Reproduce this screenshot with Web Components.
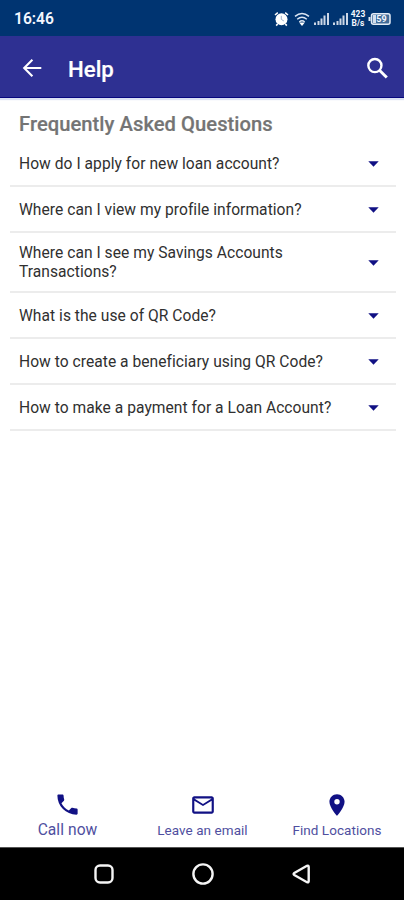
<!DOCTYPE html>
<html lang="en">
<head>
<meta charset="utf-8">
<title>Help</title>
<style>
html,body{margin:0;height:100%;background:#fff;font-family:Roboto,"Liberation Sans",sans-serif}
body{overflow:hidden}
</style>
</head>
<body>
<help-screen></help-screen>
<script>
const define = (name, html) => {
  const t = document.createElement('template');
  t.innerHTML = html;
  customElements.define(name, class extends HTMLElement {
    constructor() {
      super();
      this.attachShadow({mode: 'open'}).append(t.content.cloneNode(true));
    }
  });
};

define('status-bar', `<style>
:host{display:flex;height:36px;box-sizing:border-box;background:#003471;color:#f4f7ff;padding:1px 13px 0 14px;align-items:center;justify-content:space-between}
.time{font-size:15.6px;font-weight:600;line-height:20px;padding-top:1px}
.icons{display:flex;align-items:center;height:20px}
svg{display:block;flex:none}
.rate{font-size:8.4px;line-height:9px;font-weight:700;text-align:center;width:16px;margin:0 2px 0 1px}
.rate div{height:9px}
.bat{width:23px;height:12px;display:grid}
.bat svg{grid-area:1/1}
.bat span{grid-area:1/1;font-size:9px;line-height:12px;font-weight:700;text-align:center;padding-left:4px;z-index:1}
</style>
<span class="time">16:46</span>
<div class="icons">
<svg width="15" height="16" viewBox="0 0 15 16"><circle cx="7.5" cy="8.2" r="6" fill="#fff"/><path d="M1 4 3.8 1.7M14 4 11.2 1.7M3.6 13 2.2 14.6M11.4 13l1.4 1.6" stroke="#fff" stroke-width="1.6"/><path d="M7.3 4.8v3.6l2.6 1.6" fill="none" stroke="#9db1cc" stroke-width="1"/></svg>
<svg width="16" height="16" viewBox="0 0 16 16" style="margin:0 3px 0 5px"><path d="M1 5.4q7-6 14 0M3.2 8.3q4.8-4.2 9.6 0M5.3 11q2.7-2.4 5.4 0" fill="none" stroke="#dce6f4" stroke-width="1.4"/><path d="M5.2 11.6h5.6L8 15z" fill="#fff"/></svg>
<svg width="17" height="14" viewBox="0 0 17 14" style="margin-right:2px"><path d="M1 10.5h2V13H1zM4.5 9h2v4h-2zM7.5 6.5h2V13h-2zM10.5 3.5h2V13h-2zM14 1h2v12h-2z" fill="#cdd7e7"/></svg>
<svg width="17" height="14" viewBox="0 0 17 14"><path d="M1 10.5h2V13H1zM4.5 9h2v4h-2zM7.5 6.5h2V13h-2zM10.5 3.5h2V13h-2zM14 1h2v12h-2z" fill="#cdd7e7"/></svg>
<div class="rate"><div>423</div><div>B/s</div></div>
<div class="bat"><svg width="23" height="12" viewBox="0 0 23 12"><rect x="3.5" y=".8" width="18.5" height="10.4" rx="2" fill="#416b98" stroke="#e3ebf6" stroke-width="1.5"/><path d="M.5 4h2v4h-2z" fill="#e3ebf6"/><path d="M5 2h3v8H5z" fill="#d4dfed"/></svg><span>59</span></div>
</div>`);

define('app-bar', `<style>
:host{display:flex;height:62px;box-sizing:border-box;background:#2e3092;color:#fff;align-items:center;padding:1px 14px 0 20px;border-bottom:1px solid #07077e;box-shadow:0 2px 1px #dbe1f3;z-index:1}
h1{margin:4px auto 0 24px;font-size:22.2px;line-height:28px;font-weight:500;-webkit-text-stroke:.2px}
svg{display:block}
</style>
<svg width="24" height="24" viewBox="0 0 24 24" style="margin-top:2px"><path d="M21.3 12H4.4M12.4 3.7 4.2 12l8.2 8.3" fill="none" stroke="#fff" stroke-width="2.1"/></svg>
<h1><slot></slot></h1>
<svg width="25" height="25" viewBox="0 0 24 24" style="margin-top:2px"><circle cx="9.5" cy="9.2" r="6.3" fill="none" stroke="#fff" stroke-width="2.3"/><path d="m13.9 13.7 7 7" stroke="#fff" stroke-width="2.8"/></svg>`);

define('faq-item', `<style>
:host{display:flex;box-sizing:border-box;min-height:46px;margin:0 8px 0 10px;padding:2px 17px 0 9px;align-items:center;border-bottom:2px solid #ececec;color:#303030;font-size:15.6px;letter-spacing:.035px;line-height:18.3px}
span{flex:1;padding-right:30px}
svg{display:block;flex:none}
</style>
<span><slot></slot></span>
<svg width="11" height="6" viewBox="0 0 11 6"><path d="M.3.3h10.4L5.5 5.8z" fill="#111184"/></svg>`);

define('contact-action', `<style>
:host{display:flex;flex-direction:column;align-items:center;color:#4f4fa0;font-size:13.5px;letter-spacing:.05px;line-height:18px;white-space:nowrap}
::slotted(svg){display:block;fill:#111184;margin-bottom:3px}
</style><slot name="icon"></slot><slot></slot>`);

define('nav-bar', `<style>
:host{display:flex;height:53px;box-sizing:border-box;background:#000;border-top:1px solid #555;align-items:center;justify-content:center;gap:75px;padding-left:1px}
svg{display:block;fill:none;stroke:#f5f5f5;stroke-width:2.4}
</style>
<svg width="24" height="24" viewBox="0 0 24 24"><rect x="3.5" y="3.5" width="17" height="17" rx="4.5"/></svg>
<svg width="24" height="24" viewBox="0 0 24 24"><circle cx="12" cy="12" r="9.6"/></svg>
<svg width="24" height="24" viewBox="0 0 24 24"><path d="M17 3.8 4.3 11q-1.4 1 0 2L17 20.2q1.7.7 1.7-1.2V5q0-1.9-1.7-1.2z"/></svg>`);

define('help-screen', `<style>
:host{display:flex;flex-direction:column;height:900px;width:404px;background:#fff}
main{flex:1}
h2{margin:14px 0 4.7px 19px;font-size:20.2px;letter-spacing:.04px;line-height:24px;font-weight:500;color:#747474;-webkit-text-stroke:.2px}
.two{min-height:60px}
footer{display:grid;grid-template-columns:135px 135px 1fr;align-items:end;padding-bottom:8px}
.call{font-size:15.6px}
</style>
<status-bar></status-bar>
<app-bar>Help</app-bar>
<main>
<h2>Frequently Asked Questions</h2>
<faq-item>How do I apply for new loan account?</faq-item>
<faq-item>Where can I view my profile information?</faq-item>
<faq-item class="two">Where can I see my Savings Accounts Transactions?</faq-item>
<faq-item>What is the use of QR Code?</faq-item>
<faq-item>How to create a beneficiary using QR Code?</faq-item>
<faq-item>How to make a payment for a Loan Account?</faq-item>
</main>
<footer>
<contact-action class="call"><svg slot="icon" width="27" height="27" viewBox="0 0 24 24"><path d="M6.62 10.79c1.44 2.83 3.76 5.14 6.59 6.59l2.2-2.2c.27-.27.67-.36 1.02-.24 1.12.37 2.33.57 3.57.57.55 0 1 .45 1 1V20c0 .55-.45 1-1 1-9.39 0-17-7.61-17-17 0-.55.45-1 1-1h3.5c.55 0 1 .45 1 1 0 1.25.2 2.45.57 3.57.11.35.03.74-.25 1.02z"/></svg>Call now</contact-action>
<contact-action><svg slot="icon" width="26" height="26" viewBox="0 0 24 24"><path d="M20 4H4c-1.1 0-2 .9-2 2v12c0 1.1.9 2 2 2h16c1.1 0 2-.9 2-2V6c0-1.1-.9-2-2-2zm0 14H4V8l8 5 8-5zm-8-7L4 6h16z"/></svg>Leave an email</contact-action>
<contact-action><svg slot="icon" width="26" height="26" viewBox="0 0 24 24"><path d="M12 2C8.13 2 5 5.13 5 9c0 5.25 7 13 7 13s7-7.75 7-13c0-3.87-3.13-7-7-7zm0 9.5a2.5 2.5 0 0 1 0-5 2.5 2.5 0 0 1 0 5z"/></svg>Find Locations</contact-action>
</footer>
<nav-bar></nav-bar>`);
</script>
</body>
</html>
